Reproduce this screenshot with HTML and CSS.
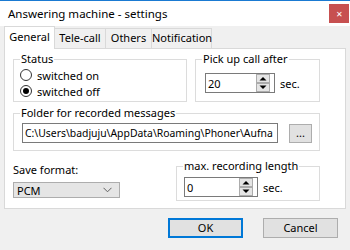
FILE: index.html
```html
<!DOCTYPE html>
<html lang="en">
<head>
	<meta charset="utf-8">
	<link rel="stylesheet" href="styles.css">
</head>
<body>
	<div class="window">
		<div class="titlebar">
			<span class="title">Answering machine - settings</span>
			<span class="close">&#x2715;</span>
		</div>
		<div class="tabs">
			<span class="tab active">General</span>
			<span class="tab tele">Tele-call</span>
			<span class="tab others">Others</span>
			<span class="tab notif">Notification</span>
		</div>
		<div class="panel">
			<div class="row">
				<fieldset class="group status">
					<legend>Status</legend>
					<div class="radio"><span class="circle"></span>switched on</div>
					<div class="radio"><span class="circle checked"></span>switched off</div>
				</fieldset>
				<fieldset class="group pickup">
					<legend>Pick up call after</legend>
					<div class="spinrow">
						<div class="spin">
							<span class="val">20</span>
							<svg class="arrows" width="14" height="18" viewBox="0 0 14 18">
								<rect x="0.5" y="0.5" width="13" height="8" fill="#e5e5e5" stroke="#acacac"/>
								<rect x="0.5" y="9.5" width="13" height="8" fill="#e5e5e5" stroke="#acacac"/>
								<path d="M3.5 6.5 L7 3 L10.5 6.5 Z" fill="#000"/>
								<path d="M3.5 11.5 L7 15 L10.5 11.5 Z" fill="#000"/>
							</svg>
						</div>
						<span>sec.</span>
					</div>
				</fieldset>
			</div>
			<fieldset class="group folder">
				<legend>Folder for recorded messages</legend>
				<div class="pathrow">
					<div class="path">C:\Users\badjuju\AppData\Roaming\Phoner\Aufna</div>
					<span class="browse">...</span>
				</div>
			</fieldset>
			<div class="row bottom">
				<div class="format">
					<div>Save format:</div>
					<div class="combo">
						<span>PCM</span>
						<svg width="9" height="6" viewBox="0 0 9 6"><path d="M0.5 0.8 L4.5 4.8 L8.5 0.8" fill="none" stroke="#606060" stroke-width="1"/></svg>
					</div>
				</div>
				<fieldset class="group maxlen">
					<legend>max. recording length</legend>
					<div class="spinrow">
						<div class="spin">
							<span class="val">0</span>
							<svg class="arrows" width="14" height="18" viewBox="0 0 14 18">
								<rect x="0.5" y="0.5" width="13" height="8" fill="#e5e5e5" stroke="#acacac"/>
								<rect x="0.5" y="9.5" width="13" height="8" fill="#e5e5e5" stroke="#acacac"/>
								<path d="M3.5 6.5 L7 3 L10.5 6.5 Z" fill="#000"/>
								<path d="M3.5 11.5 L7 15 L10.5 11.5 Z" fill="#000"/>
							</svg>
						</div>
						<span>sec.</span>
					</div>
				</fieldset>
			</div>
		</div>
		<div class="buttons">
			<span class="btn default">OK</span>
			<span class="btn">Cancel</span>
		</div>
	</div>
</body>
</html>
```

FILE: styles.css
```css
* {
	box-sizing: border-box;
}

html,
body {
	margin: 0;
	padding: 0;
}

body {
	width: 350px;
	height: 250px;
	overflow: hidden;
	background-color: #f0f0f0;
	font-family: "Noto Sans", sans-serif;
	font-size: 11px;
	color: #000000;
}

.window {
	height: 250px;
	border-top: 1px solid #1a7ad2;
}

.titlebar {
	height: 25px;
	background-color: #ffffff;
	display: flex;
	align-items: center;
	padding-left: 8px;
}

.title {
	flex: 1;
	font-size: 11.5px;
}

.close {
	width: 20px;
	height: 19px;
	margin-right: 1px;
	background-color: #c75050;
	color: #ffffff;
	font-size: 8px;
	display: flex;
	align-items: center;
	justify-content: center;
}

/* tab strip */
.tabs {
	display: flex;
	align-items: flex-end;
	height: 22px;
	padding-left: 4px;
}

.tab {
	height: 20px;
	line-height: 18px;
	text-align: center;
	border: 1px solid #d9d9d9;
	border-bottom: none;
	margin-left: -1px;
}

.tab.active {
	position: relative;
	z-index: 1;
	height: 23px;
	margin-bottom: -1px;
	margin-left: 0;
	width: 51px;
	background-color: #ffffff;
	line-height: 20px;
}

.tele {
	width: 52px;
}

.others {
	width: 47px;
}

.notif {
	width: 61px;
}

.panel {
	height: 161px;
	margin: 0 4px;
	background-color: #ffffff;
	border: 1px solid #d9d9d9;
	padding: 3px 0 0 8px;
}

.row {
	display: flex;
}

.group {
	margin: 0;
	padding: 0 6px;
	border: 1px solid #dcdcdc;
	min-width: 0;
}

.group legend {
	padding: 0 1px;
	line-height: 14px;
}

.status {
	width: 174px;
	height: 50px;
}

.radio {
	display: flex;
	align-items: center;
	height: 16px;
}

.radio:first-of-type {
	margin-top: 1px;
}

.circle {
	width: 12px;
	height: 12px;
	border: 1px solid #333333;
	border-radius: 50%;
	margin-right: 5px;
	display: flex;
	align-items: center;
	justify-content: center;
}

.circle.checked::after {
	content: "";
	width: 6px;
	height: 6px;
	border-radius: 50%;
	background-color: #000000;
}

.pickup {
	width: 125px;
	height: 50px;
	margin-left: 8px;
}

.spinrow {
	display: flex;
	align-items: center;
	gap: 5px;
}

.pickup .spinrow {
	margin: 7px 0 0 3px;
}

.spin {
	width: 70px;
	height: 20px;
	border: 1px solid #7a7a7a;
	display: flex;
	align-items: center;
	padding: 0 4px 0 2px;
}

.spin .val {
	flex: 1;
}

.folder {
	width: 307px;
	height: 45px;
	margin-top: 4px;
}

.pathrow {
	display: flex;
	align-items: center;
	margin: 3px 0 0 2px;
}

.path {
	width: 256px;
	height: 20px;
	line-height: 18px;
	border: 1px solid #7a7a7a;
	padding-left: 2px;
	font-size: 10.4px;
	white-space: nowrap;
	overflow: hidden;
}

.browse {
	width: 23px;
	height: 19px;
	margin-left: 11px;
	background-color: #e1e1e1;
	border: 1px solid #adadad;
	text-align: center;
	line-height: 15px;
}

.bottom {
	margin-top: 8px;
}

.format {
	width: 107px;
	padding-top: 3px;
}

.combo {
	height: 16px;
	margin-top: 5px;
	background-color: #e5e5e5;
	border: 1px solid #adadad;
	display: flex;
	align-items: center;
	justify-content: space-between;
	padding: 0 7px 0 3px;
}

.maxlen {
	width: 144px;
	height: 42px;
	margin-left: 56px;
}

.maxlen .spinrow {
	margin: 4px 0 0 1px;
}

.maxlen .spin {
	width: 74px;
}

.buttons {
	display: flex;
	justify-content: flex-end;
	gap: 20px;
	padding: 9px 12px 0 0;
}

.btn {
	width: 75px;
	height: 20px;
	background-color: #e1e1e1;
	border: 1px solid #adadad;
	text-align: center;
	line-height: 18px;
}

.btn.default {
	border: 2px solid #0078d7;
	line-height: 16px;
}
```
